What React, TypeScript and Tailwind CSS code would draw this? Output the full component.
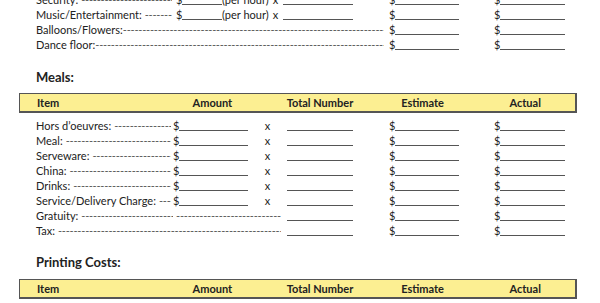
import React from 'react';

const DASHES = '-'.repeat(200);

// blank line used for writing amounts in
function Blank({ w }: { w: string }) {
  return <span className={`inline-block ${w} h-[10px] border-b-[1.5px] border-[#555] translate-y-[1px]`} />;
}

function Dashes() {
  return (
    <span className="flex-1 overflow-hidden whitespace-nowrap text-[#555] tracking-[-0.2px]">{DASHES}</span>
  );
}

function Money({ w }: { w: string }) {
  return (
    <span className="flex items-baseline">
      <span className="w-[6px]">$</span>
      <Blank w={w} />
    </span>
  );
}

function EstimateActual({ gap = 'w-[36px]' }: { gap?: string }) {
  return (
    <>
      <span className={gap} />
      <Money w="w-[64px]" />
      <span className="w-[35px]" />
      <Money w="w-[65px]" />
    </>
  );
}

function MealRow({ label }: { label: string }) {
  return (
    <div className="flex items-baseline h-[15px] pl-[36px]">
      <span className="flex w-[137px] items-baseline pr-[2px]">
        <span className="whitespace-nowrap pr-[3px]">{label}</span>
        <Dashes />
      </span>
      <Money w="w-[69px]" />
      <span className="w-[39px] text-center">x</span>
      <Blank w="w-[66px]" />
      <EstimateActual />
    </div>
  );
}

function TableHeader() {
  return (
    <div className="ml-[19px] w-[558px] h-[20px] flex items-center border border-[#555] border-r-2 border-b-2 bg-[#fcef92] font-bold text-[11px]">
      <span className="w-[150px] pl-[17px]">Item</span>
      <span className="w-[86px] text-center">Amount</span>
      <span className="w-[130px] text-center">Total Number</span>
      <span className="w-[76px] text-center">Estimate</span>
      <span className="w-[15px]" />
      <span className="w-[100px] text-center">Actual</span>
    </div>
  );
}

const meals = [
  'Hors d\u2019oeuvres:',
  'Meal:',
  'Serveware:',
  'China:',
  'Drinks:',
  'Service/Delivery Charge:',
];

export default function App() {
  return (
    <div className="w-[600px] h-[303px] overflow-hidden bg-white text-[#222] text-[11px] leading-[15px] font-['Lato','Liberation_Sans',sans-serif]">
      <div className="-mt-[8px]">
        {/* Entertainment rows */}
        {['Security:', 'Music/Entertainment:'].map((label) => (
          <div key={label} className="flex items-baseline h-[15px] pl-[36px]">
            <span className="flex w-[140px] items-baseline pr-[4px]">
              <span className="whitespace-nowrap pr-[3px]">{label}</span>
              <Dashes />
            </span>
            <Money w="w-[40px]" />
            <span className="w-[46px] whitespace-nowrap">(per hour)</span>
            <span className="w-[15px] text-center">x</span>
            <Blank w="w-[70px]" />
            <EstimateActual />
          </div>
        ))}
        {['Balloons/Flowers:', 'Dance floor:'].map((label) => (
          <div key={label} className="flex items-baseline h-[15px] pl-[36px]">
            <span className="flex w-[348px] items-baseline">
              <span className="whitespace-nowrap">{label}</span>
              <Dashes />
            </span>
            <EstimateActual gap="w-[5px]" />
          </div>
        ))}

        {/* Meals */}
        <h2 className="mt-[18px] pl-[36px] h-[15px] text-[13px] font-bold">Meals:</h2>
        <div className="mt-[8px]">
          <TableHeader />
        </div>
        <div className="mt-[5px]">
          {meals.map((m) => (
            <MealRow key={m} label={m} />
          ))}
          <div className="flex items-baseline h-[15px] pl-[36px]">
            <span className="flex w-[137px] items-baseline">
              <span className="whitespace-nowrap pr-[3px]">Gratuity:</span>
              <Dashes />
            </span>
            <span className="w-[3px]" />
            <span className="flex w-[105px]"><Dashes /></span>
            <span className="w-[6px]" />
            <Blank w="w-[66px]" />
            <EstimateActual />
          </div>
          <div className="flex items-baseline h-[15px] pl-[36px]">
            <span className="flex w-[245px] items-baseline">
              <span className="whitespace-nowrap pr-[3px]">Tax:</span>
              <Dashes />
            </span>
            <span className="w-[6px]" />
            <Blank w="w-[66px]" />
            <EstimateActual />
          </div>
        </div>

        {/* Printing */}
        <h2 className="mt-[17px] pl-[36px] h-[16px] text-[13px] font-bold">Printing Costs:</h2>
        <div className="mt-[8px]">
          <TableHeader />
        </div>
      </div>
    </div>
  );
}
